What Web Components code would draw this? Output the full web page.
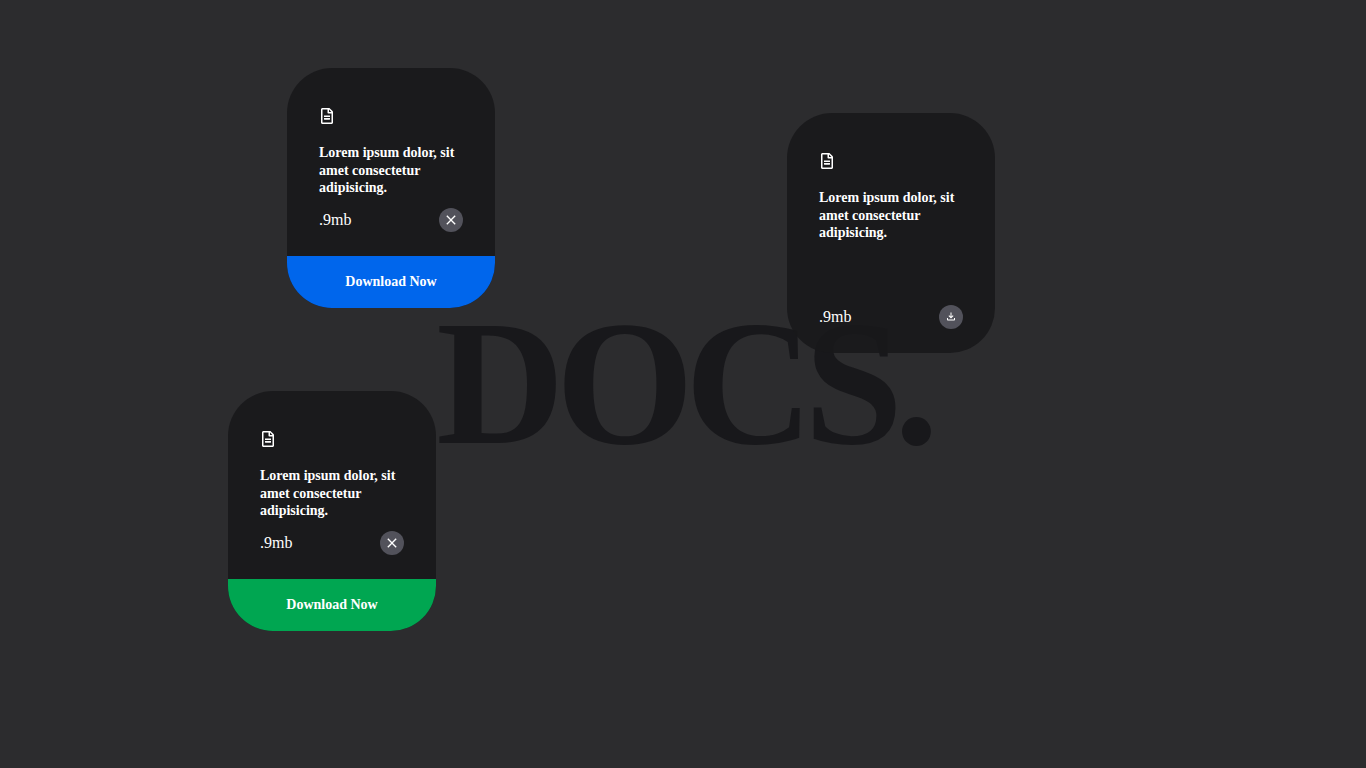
<!DOCTYPE html>
<html lang="en">
<head>
<meta charset="utf-8">
<title>Docs</title>
<style>
html, body { height: 100%; margin: 0; }
body { background: #2c2c2e; font-family: "Liberation Serif", "Times New Roman", serif; color: #fff; overflow: hidden; }
</style>
</head>
<body>
<docs-board>
  <doc-card slot="cards" style="--x:287px;--y:68px;--accent:#0066ec" size=".9mb" action="Download Now" icon="close">Lorem ipsum dolor, sit amet consectetur adipisicing.</doc-card>
  <doc-card slot="cards" style="--x:787px;--y:113px" size=".9mb" icon="download">Lorem ipsum dolor, sit amet consectetur adipisicing.</doc-card>
  <doc-card slot="cards" style="--x:228px;--y:391px;--accent:#00a651" size=".9mb" action="Download Now" icon="close">Lorem ipsum dolor, sit amet consectetur adipisicing.</doc-card>
</docs-board>

<script>
const ICONS = {
  file: '<svg viewBox="0 0 384 512" fill="currentColor" aria-hidden="true"><path d="M288 248v28c0 6.600-5.400 12-12 12H108c-6.600 0-12-5.400-12-12v-28c0-6.600 5.400-12 12-12h168c6.600 0 12 5.400 12 12zm-12 72H108c-6.600 0-12 5.400-12 12v28c0 6.600 5.400 12 12 12h168c6.600 0 12-5.400 12-12v-28c0-6.600-5.400-12-12-12zm108-188.100V464c0 26.500-21.500 48-48 48H48c-26.500 0-48-21.500-48-48V48C0 21.500 21.500 0 48 0h204.100C264.800 0 277 5.100 286 14.100L369.900 98c9 8.900 14.100 21.200 14.100 33.900zm-128-80V128h76.100L256 51.900zM336 464V176H232c-13.300 0-24-10.700-24-24V48H48v416h288z"/></svg>',
  close: '<svg class="close" viewBox="0 0 24 24" fill="currentColor" aria-hidden="true"><path d="M19 6.410L17.590 5 12 10.590 6.410 5 5 6.410 10.590 12 5 17.590 6.410 19 12 13.410 17.590 19 19 17.590 13.410 12z"/></svg>',
  download: '<svg class="download" viewBox="0 0 24 24" fill="currentColor" aria-hidden="true"><path d="M18 14v3H6v-3H4v3c0 1.100.9 2 2 2h12c1.100 0 2-.9 2-2v-3h-2zm-1-4-1.410-1.410L13 11.170V3h-2v8.170L8.410 8.590 7 10l5 5 5-5z"/></svg>'
};

/* Canvas with the large title behind freely placed cards. */
class DocsBoard extends HTMLElement {
  constructor() {
    super();
    this.attachShadow({ mode: 'open' }).innerHTML = `
      <style>
        :host { display: grid; place-items: center; position: relative; min-height: 100vh; }
        h1 { margin: 0; font-size: 13vw; line-height: 1; font-weight: 700; letter-spacing: -0.05em; color: #18181b; }
      </style>
      <h1>DOCS.</h1>
      <slot name="cards"></slot>`;
  }
}

/* Document card: --x and --y place it on the canvas, --accent colours its action bar. */
class DocCard extends HTMLElement {
  connectedCallback() {
    if (this.shadowRoot) return;
    const icon = this.getAttribute('icon');
    const action = this.getAttribute('action');
    this.attachShadow({ mode: 'open' }).innerHTML = `
      <style>
        :host { position: absolute; left: var(--x); top: var(--y); box-sizing: border-box; display: flex; flex-direction: column; width: 208px; height: 240px; padding-top: 40px; border-radius: 45px; overflow: hidden; background: rgb(24 24 27 / 90%); }
        .file { display: block; margin-left: 32px; width: 16px; height: 16px; }
        .file svg { display: block; width: 16px; height: 16px; }
        p { margin: 20px 32px 0; font-size: 14px; line-height: 1.25; font-weight: 700; }
        footer { margin-top: auto; }
        .row { display: flex; align-items: center; justify-content: space-between; padding: 0 32px 24px; font-size: 16px; line-height: 24px; }
        button { font: inherit; color: inherit; border: 0; cursor: pointer; }
        .round { display: flex; align-items: center; justify-content: center; width: 24px; height: 24px; padding: 0; border-radius: 50%; background: #52525b; }
        .close { width: 16px; height: 16px; }
        .download { width: 12px; height: 12px; }
        .action { display: block; width: 100%; padding: 16px 0; background: var(--accent); font-size: 14px; line-height: 20px; font-weight: 700; }
      </style>
      <span class="file">${ICONS.file}</span>
      <p><slot></slot></p>
      <footer>
        <div class="row"><span>${this.getAttribute('size')}</span><button class="round" type="button" aria-label="${icon}">${ICONS[icon]}</button></div>
        ${action ? `<button class="action" type="button">${action}</button>` : ''}
      </footer>`;
  }
}

customElements.define('docs-board', DocsBoard);
customElements.define('doc-card', DocCard);
</script>
</body>
</html>
